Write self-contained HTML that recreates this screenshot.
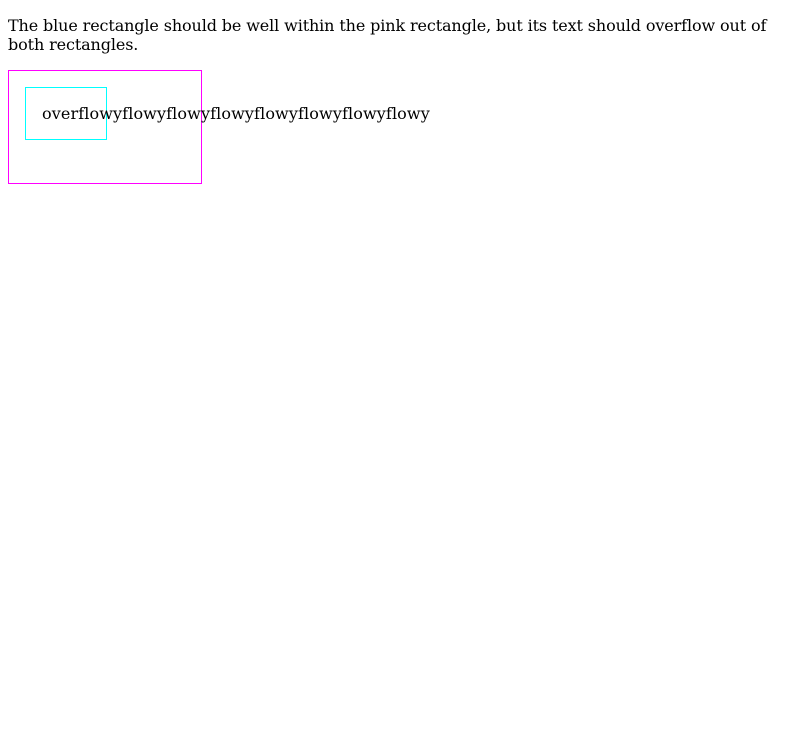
<!DOCTYPE html>
<html><head><style>
body{margin:8px;font-family:"DejaVu Serif",serif;font-size:16px;line-height:19px;background:#fff;color:#000}
p{margin:16px 0 16px;letter-spacing:-0.12px}
.pink{border:1px solid magenta;width:160px;height:80px;padding:16px}
.blue{border:1px solid cyan;width:48px;height:19px;padding:16px;white-space:nowrap;letter-spacing:0.11px}
</style></head><body>
<p>The blue rectangle should be well within the pink rectangle, but its text should overflow out of both rectangles.</p>
<div class="pink"><div class="blue">overflowyflowyflowyflowyflowyflowyflowyflowy</div></div>
</body></html>
